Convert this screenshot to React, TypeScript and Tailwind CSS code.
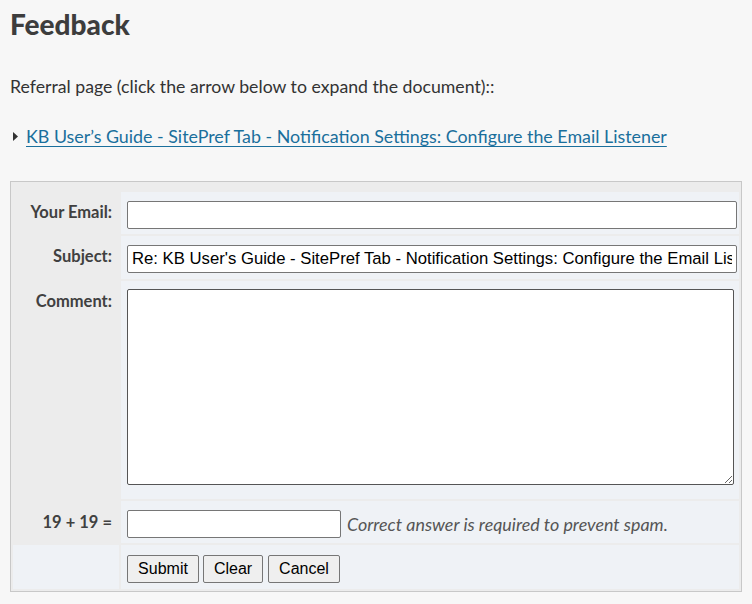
import React from 'react';

const labelFont = { fontFamily: 'Lato, "Noto Sans", sans-serif' };
const fieldFont = { fontFamily: '"Liberation Sans", Arial, sans-serif' };

function Label({ children, className = '' }: { children: React.ReactNode; className?: string }) {
  return (
    <div
      className={`bg-[#ececec] pr-[7px] pt-[10px] text-right text-[16.5px] font-bold leading-[20px] text-[#404040] ${className}`}
    >
      {children}
    </div>
  );
}

export default function App() {
  const subject =
    "Re: KB User's Guide - SitePref Tab - Notification Settings: Configure the Email Listener";

  return (
    <div className="min-h-screen bg-[#f7f7f7] px-[10px] pt-[8px] text-[#333]" style={labelFont}>
      <h1 className="text-[28px] font-black leading-[32px] text-[#3d3d3d]">Feedback</h1>

      <p className="mt-[34px] text-[17.7px] leading-[26px]">
        Referral page (click the arrow below to expand the document)::
      </p>

      <div className="mt-[23px] flex items-center gap-[8px] pl-[3px] text-[17.85px] leading-[26px]">
        <svg width="5" height="9" viewBox="0 0 5 9" className="shrink-0">
          <path d="M0 0 L5 4.5 L0 9 Z" fill="#333" />
        </svg>
        <a href="#" className="text-[#1a6f9c] underline underline-offset-[3px]">
          KB User’s Guide - SitePref Tab - Notification Settings: Configure the Email Listener
        </a>
      </div>

      {/* Feedback form */}
      <div className="mt-[32px] w-[732px] border border-[#c8c8c8] bg-[#ececec] px-[2px] pb-[2px] pt-[10px]">
        <div className="grid grid-cols-[106px_1fr] gap-[2px]">
          <Label>Your Email:</Label>
          <div className="h-[42px] bg-[#eff2f6] pl-[6px] pt-[9px]">
            <input
              type="text"
              className="h-[28px] w-[610px] rounded-[2px] border border-[#767676] bg-white px-[4px] text-[16.7px] text-black outline-none"
              style={fieldFont}
            />
          </div>

          <Label>Subject:</Label>
          <div className="h-[43px] bg-[#eff2f6] pl-[6px] pt-[9px]">
            <input
              type="text"
              defaultValue={subject}
              className="h-[28px] w-[610px] rounded-[2px] border border-[#767676] bg-white px-[4px] text-[16.7px] text-black outline-none"
              style={fieldFont}
            />
          </div>

          <Label>Comment:</Label>
          <div className="h-[218px] bg-[#eff2f6] pl-[6px] pt-[8px]">
            <textarea
              className="block h-[196px] w-[607px] rounded-[2px] border border-[#555] bg-white px-[4px] text-[16px] text-black outline-none"
              style={fieldFont}
            />
          </div>

          <Label className="pt-[11px]">19 + 19 =</Label>
          <div className="flex h-[42px] items-start gap-[6px] bg-[#eff2f6] pl-[6px] pt-[9px]">
            <input
              type="text"
              className="h-[28px] w-[214px] rounded-[2px] border border-[#767676] bg-white px-[4px] text-[16px] text-black outline-none"
              style={fieldFont}
            />
            <span className="text-[17.9px] italic leading-[28px] text-[#555]">
              Correct answer is required to prevent spam.
            </span>
          </div>

          <div className="bg-[#eff2f6]" />
          <div className="flex h-[44px] gap-[4px] bg-[#eff2f6] pl-[6px] pt-[10px]" style={fieldFont}>
            <button className="h-[28px] w-[72px] rounded-[2px] border border-[#767676] bg-[#efefef] text-[16px] text-black">
              Submit
            </button>
            <button className="h-[28px] w-[60px] rounded-[2px] border border-[#767676] bg-[#efefef] text-[16px] text-black">
              Clear
            </button>
            <button className="ml-[1px] h-[28px] w-[72px] rounded-[2px] border border-[#767676] bg-[#efefef] text-[16px] text-black">
              Cancel
            </button>
          </div>
        </div>
      </div>
    </div>
  );
}
